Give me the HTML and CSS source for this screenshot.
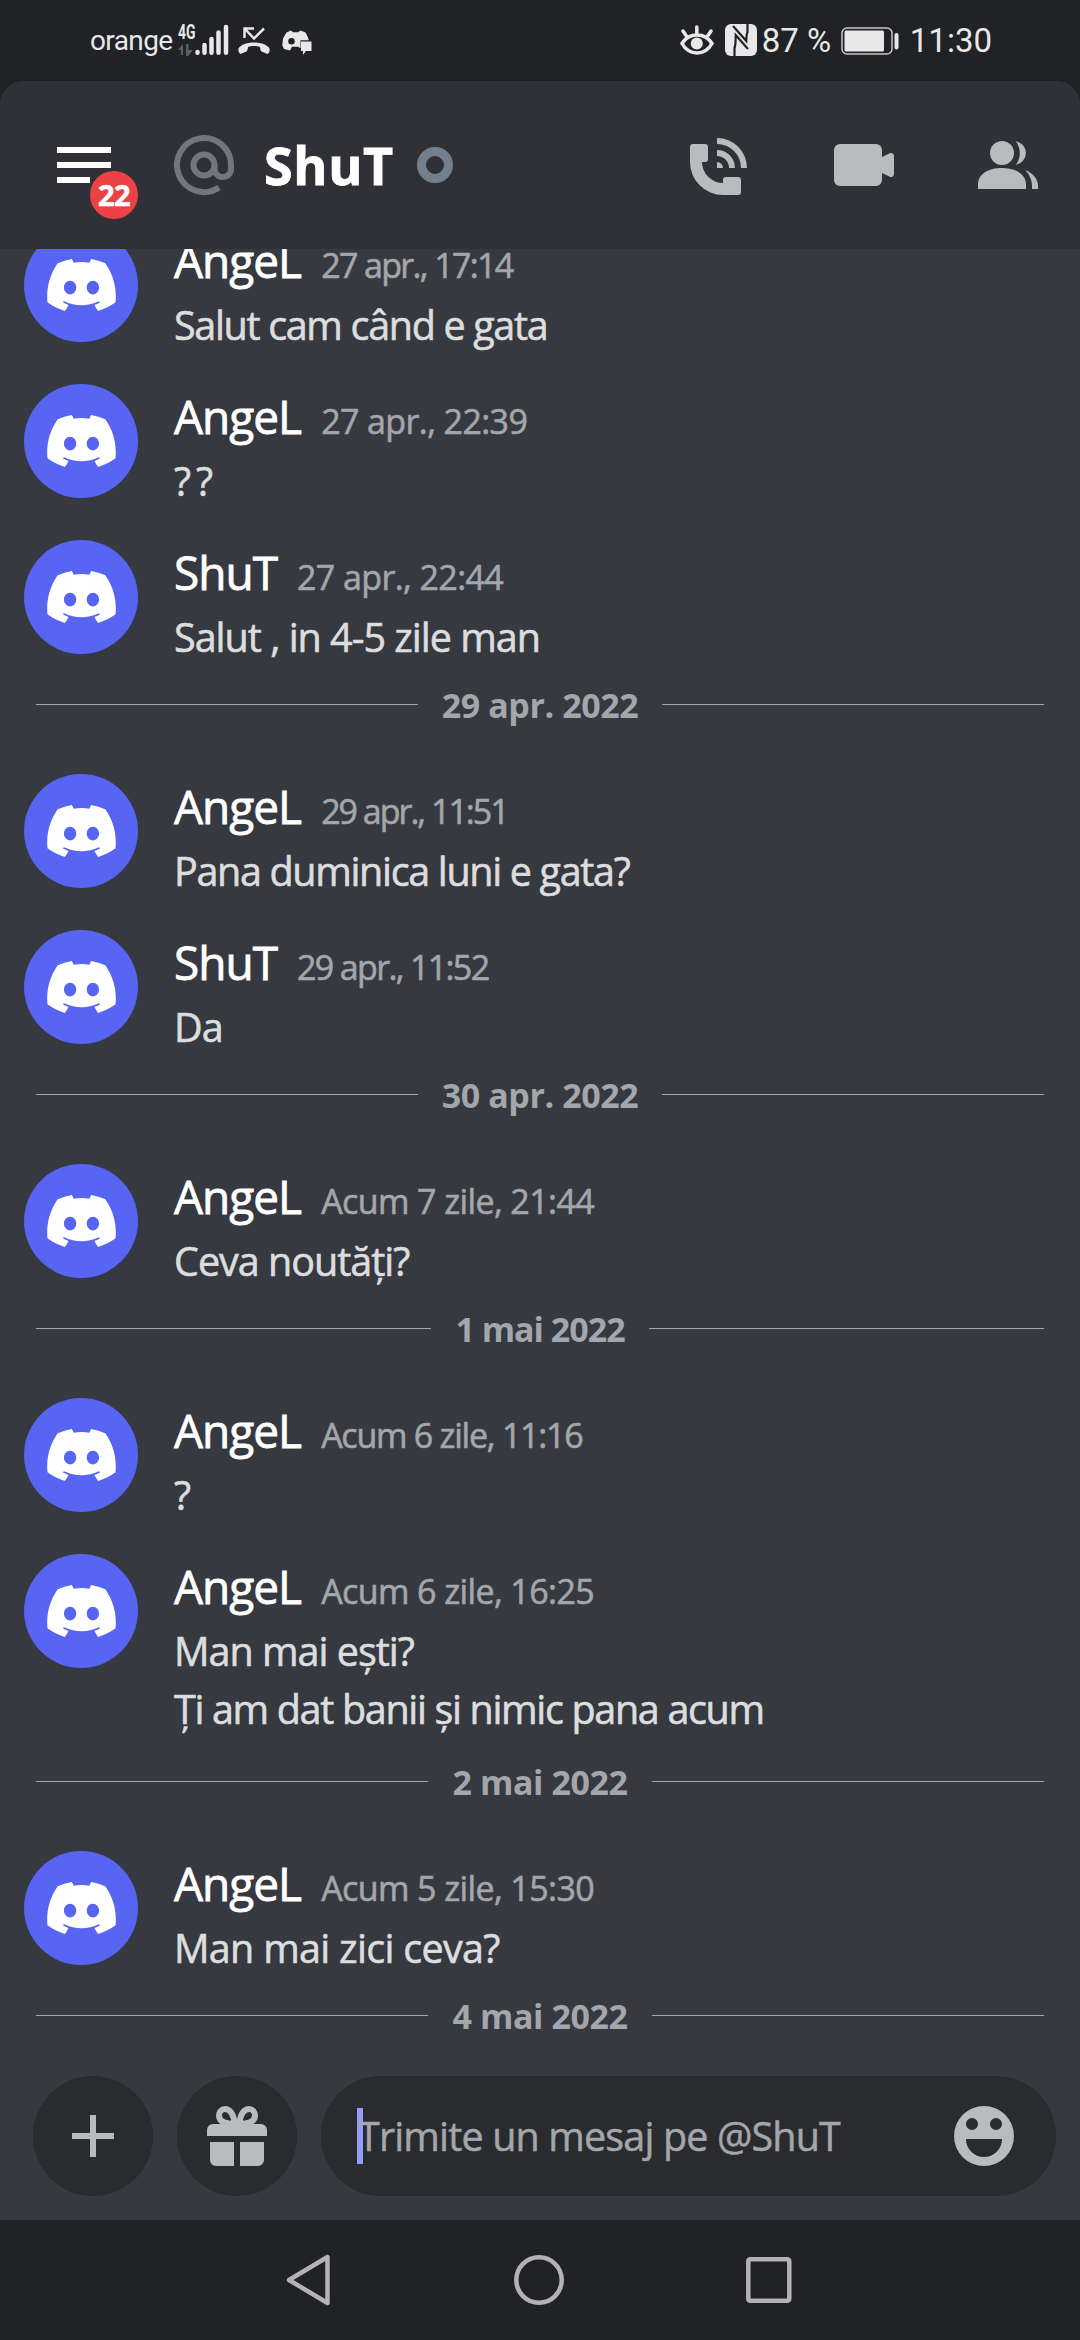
FILE: index.html
```html
<!DOCTYPE html>
<html lang="ro">
<head>
<meta charset="utf-8">
<title>ShuT</title>
<link rel="stylesheet" href="styles.css">
</head>
<body>
<svg class="defs" width="0" height="0" aria-hidden="true">
  <symbol id="logo" viewBox="0 0 127.14 96.36"><path d="M107.7,8.07A105.15,105.15,0,0,0,81.47,0a72.06,72.06,0,0,0-3.36,6.83A97.68,97.68,0,0,0,49,6.83,72.37,72.37,0,0,0,45.64,0,105.89,105.89,0,0,0,19.39,8.09C2.79,32.65-1.71,56.6.54,80.21h0A105.73,105.73,0,0,0,32.71,96.36,77.7,77.7,0,0,0,39.6,85.25a68.42,68.42,0,0,1-10.85-5.18c.91-.66,1.8-1.34,2.66-2a75.57,75.57,0,0,0,64.32,0c.87.71,1.76,1.39,2.66,2a68.68,68.68,0,0,1-10.87,5.19,77,77,0,0,0,6.89,11.1A105.25,105.25,0,0,0,126.6,80.22h0C129.24,52.84,122.09,29.11,107.7,8.07ZM42.45,65.69C36.18,65.69,31,60,31,53s5-12.74,11.43-12.74S54,46,53.89,53,48.84,65.69,42.45,65.69Zm42.24,0C78.41,65.69,73.25,60,73.25,53s5-12.74,11.44-12.74S96.23,46,96.12,53,91.08,65.69,84.69,65.69Z"/></symbol>
</svg>
<div class="screen">
  <div class="status">
    <div class="status-left">
      <span class="carrier">orange</span>
      <svg class="signal" width="51" height="34" viewBox="0 0 51 34">
        <text class="net" x="0" y="15.5" textLength="17.5" lengthAdjust="spacingAndGlyphs">4G</text>
        <path class="dim" d="M0 27l5-6v11H3v-5zM8 21h2.500v6H15l-5 6H8z"/>
        <g class="bars"><path d="M19.500 29v.8M26.500 22v7.800M33.500 16v13.800M40.500 9.500v20.300M48 4v25.800"/></g>
      </svg>
      <svg class="missed" width="32" height="28" viewBox="0 0 32 28">
        <path class="line" d="M6.500 11V1.500H16M7 2l9 9.500L26 1.500"/>
        <path d="M.5 21.500C5 13.500 27 13.500 31.500 21.500c.6 2-.3 5-2 5.500l-6-2.500c-1.500-.8-1-3.500-1.700-4.500-3-1.200-8.600-1.200-11.600 0-.7 1-.2 3.700-1.700 4.500l-6 2.500c-1.700-.5-2.600-3.500-2-5.500z"/>
      </svg>
      <svg class="bot" width="30" height="26" viewBox="0 0 30 26">
        <path fill-rule="evenodd" d="M4.500 2.500 9 .5l2 1.800h5L18.500.5l5 2 2.500 5 .8 2.700H18.500v8L16 16.800H10L8 20.500 2 19 .3 15.500l.7-7zM9.500 8a3.300 3.300 0 1 0 0 6.600 3.300 3.300 0 1 0 0-6.600z"/>
        <path d="M19 11.500h10.500v9.500H24l-3 4v-4h-2z"/>
      </svg>
    </div>
    <div class="status-right">
      <svg class="eye" width="34" height="30" viewBox="0 0 34 30">
        <path class="stroke" d="M2 18.500C9 7 25 7 32 18.500 25 31 9 31 2 18.500zM16.800 2v6M3 6l4 6M31 6l-4 6"/>
        <circle cx="16.800" cy="18.500" r="6"/>
      </svg>
      <svg class="nfc" width="32" height="32" viewBox="0 0 32 32">
        <rect width="32" height="32" rx="6"/>
        <path class="cut" d="M9.500 33V24c1.500-4 1-8 1.200-13L23 25M22.500-1v9c-1.500 3-1 5-1.200 9L8 2"/>
      </svg>
      <span class="percent">87 %</span>
      <svg class="battery" width="58" height="28" viewBox="0 0 58 28">
        <rect class="frame" x="1" y="1" width="50" height="26" rx="5"/>
        <rect x="3.500" y="3.500" width="39.500" height="21" rx="1.500"/>
        <rect x="53.500" y="6" width="4" height="16.500" rx="2"/>
      </svg>
      <span class="clock">11:30</span>
    </div>
  </div>

  <div class="app">
    <header class="header">
      <div class="menu">
        <svg width="54" height="36" viewBox="0 0 54 36"><path d="M0 0h54v6H0zM0 15h54v6H0zM0 30h33v6H0z"/></svg>
        <span class="badge">22</span>
      </div>
      <svg class="at" width="72" height="72" viewBox="0 0 24 24"><circle cx="12" cy="12" r="3.500"/><path d="M17 19.500A9 9 0 1 1 21 12v1.300a2.750 2.700 0 0 1-5.500 0V12"/></svg>
      <h1 class="title">ShuT</h1>
      <span class="offline"></span>
      <div class="actions">
        <svg class="call" width="72" height="72" viewBox="0 0 24 24"><path d="M4 5h4a1 1 0 0 1 1 1v4a1 1 0 0 1-1 1H7a7 7 0 0 0 7 7v-1a1 1 0 0 1 1-1h4a1 1 0 0 1 1 1v4a1 1 0 0 1-1 1h-5A11 11 0 0 1 3 11V6a1 1 0 0 1 1-1zM12 11a2 2 0 0 1 2 2h-2zM12 7a6 6 0 0 1 6 6h-2a4 4 0 0 0-4-4zM12 3a10 10 0 0 1 10 10h-2a8 8 0 0 0-8-8z"/></svg>
        <svg width="72" height="72" viewBox="0 0 24 24"><path d="M4 5h12a2 2 0 0 1 2 2v2.300l2.600-1.200A1 1 0 0 1 22 9v6a1 1 0 0 1-1.400.9L18 14.700V17a2 2 0 0 1-2 2H4a2 2 0 0 1-2-2V7a2 2 0 0 1 2-2z"/></svg>
        <svg width="72" height="72" viewBox="0 0 24 24"><circle cx="10" cy="8" r="4"/><path d="M2 20v-1.500C2 15 5.500 13 10 13s8 2 8 5.500V20zM14.600 4.050a4 4 0 0 1 0 7.900 6.500 6.500 0 0 0 0-7.900zM17.700 13.700C20.500 14.800 22 16.800 22 19v1h-2v-1c0-2-.8-3.800-2.300-5.300z"/></svg>
      </div>
    </header>

    <main class="messages">
      <article class="message">
        <div class="avatar"><svg><use href="#logo"/></svg></div>
        <div class="body"><div class="meta"><span class="name">AngeL</span><time class="narrow">27 apr., 17:14</time></div><p class="snug">Salut cam când e gata</p></div>
      </article>
      <article class="message">
        <div class="avatar"><svg><use href="#logo"/></svg></div>
        <div class="body"><div class="meta"><span class="name">AngeL</span><time>27 apr., 22:39</time></div><p class="wide">??</p></div>
      </article>
      <article class="message">
        <div class="avatar"><svg><use href="#logo"/></svg></div>
        <div class="body"><div class="meta"><span class="name">ShuT</span><time>27 apr., 22:44</time></div><p>Salut , in 4-5 zile man</p></div>
      </article>
      <div class="divider"><span>29 apr. 2022</span></div>
      <article class="message">
        <div class="avatar"><svg><use href="#logo"/></svg></div>
        <div class="body"><div class="meta"><span class="name">AngeL</span><time class="narrower">29 apr., 11:51</time></div><p class="snug">Pana duminica luni e gata?</p></div>
      </article>
      <article class="message">
        <div class="avatar"><svg><use href="#logo"/></svg></div>
        <div class="body"><div class="meta"><span class="name">ShuT</span><time class="narrow">29 apr., 11:52</time></div><p>Da</p></div>
      </article>
      <div class="divider"><span>30 apr. 2022</span></div>
      <article class="message">
        <div class="avatar"><svg><use href="#logo"/></svg></div>
        <div class="body"><div class="meta"><span class="name">AngeL</span><time>Acum 7 zile, 21:44</time></div><p>Ceva noutăți?</p></div>
      </article>
      <div class="divider"><span class="narrow-date">1 mai 2022</span></div>
      <article class="message">
        <div class="avatar"><svg><use href="#logo"/></svg></div>
        <div class="body"><div class="meta"><span class="name">AngeL</span><time class="trim">Acum 6 zile, 11:16</time></div><p>?</p></div>
      </article>
      <article class="message">
        <div class="avatar"><svg><use href="#logo"/></svg></div>
        <div class="body"><div class="meta"><span class="name">AngeL</span><time>Acum 6 zile, 16:25</time></div><p>Man mai ești?</p><p class="snug">Ți am dat banii și nimic pana acum</p></div>
      </article>
      <div class="divider"><span>2 mai 2022</span></div>
      <article class="message">
        <div class="avatar"><svg><use href="#logo"/></svg></div>
        <div class="body"><div class="meta"><span class="name">AngeL</span><time>Acum 5 zile, 15:30</time></div><p class="loose">Man mai zici ceva?</p></div>
      </article>
      <div class="divider"><span>4 mai 2022</span></div>
    </main>

    <footer class="composer">
      <div class="round"><svg width="42" height="42" viewBox="0 0 42 42"><path d="M18 0h6v18h18v6H24v18h-6V24H0v-6h18z"/></svg></div>
      <div class="round"><svg width="72" height="72" viewBox="0 0 24 24"><path d="M4 8h16a2 2 0 0 1 2 2v2H2v-2a2 2 0 0 1 2-2zM3 14h8v8H5a2 2 0 0 1-2-2zM13 14h8v6a2 2 0 0 1-2 2h-6z"/><path class="bow" d="M11.200 8C11 5 9.800 3 8 3 6.800 3 6 4 6 5.200 6 7.200 8 8 11.200 8zM12.800 8C13 5 14.200 3 16 3c1.200 0 2 1 2 2.200C18 7.200 16 8 12.800 8z"/></svg></div>
      <div class="input">
        <span class="caret"></span>
        <span class="placeholder">Trimite un mesaj pe @ShuT</span>
        <svg class="emoji" width="60" height="60" viewBox="0 0 60 60"><path fill-rule="evenodd" d="M30 0a30 30 0 1 0 0 60 30 30 0 1 0 0-60zM18 12a6 6 0 1 1 0 12 6 6 0 1 1 0-12zM42 12a6 6 0 1 1 0 12 6 6 0 1 1 0-12zM12 33h36a18 18 0 0 1-36 0z"/></svg>
      </div>
    </footer>
  </div>

  <nav class="nav">
    <svg width="50" height="54" viewBox="0 0 50 54"><path d="M43.500 4v46L5 27z"/></svg>
    <svg width="54" height="54" viewBox="0 0 54 54"><circle cx="27" cy="27" r="22.700"/></svg>
    <svg width="50" height="54" viewBox="0 0 50 54"><rect x="4.300" y="6.300" width="41" height="41.500" rx="2"/></svg>
  </nav>
</div>
</body>
</html>
```
FILE: styles.css
```css
* { box-sizing: border-box; margin: 0; padding: 0; }
body { background: #202225; font-family: "Open Sans", "Noto Sans", sans-serif; }
svg { display: block; flex: none; }
.defs { position: absolute; }
.screen { width: 1080px; height: 2340px; display: flex; flex-direction: column; overflow: hidden; background: #202225; white-space: nowrap; }

.status { height: 81px; flex: none; display: flex; justify-content: space-between; padding: 0 88px 0 90px; color: #e8e8e8; fill: #e8e8e8; font-family: Roboto, sans-serif; }
.status-left, .status-right { display: flex; align-items: flex-start; }
.carrier { width: 88px; font-size: 28px; line-height: 34px; padding-top: 24px; letter-spacing: -.6px; }
.signal { margin-top: 23px; overflow: visible; }
.net { font-weight: 700; font-size: 19.500px; }
.dim { fill: #5c5d60; }
.bars { fill: none; stroke: #e8e8e8; stroke-width: 4.500; stroke-linecap: round; }
.missed { margin: 27px 0 0 9px; }
.missed .line { fill: none; stroke: #e8e8e8; stroke-width: 2.500; }
.bot { margin: 30px 0 0 12px; }
.eye { margin: 25px 11px 0 0; }
.eye .stroke { fill: none; stroke: #e8e8e8; stroke-width: 3.500; stroke-linecap: round; }
.nfc { margin: 24px 5px 0 0; }
.nfc .cut { fill: none; stroke: #202225; stroke-width: 2.200; }
.percent, .clock { font-size: 33px; line-height: 38px; padding-top: 22px; }
.percent { width: 79px; }
.battery { margin: 27px 11px 0 0; }
.battery .frame { fill: none; stroke: #c8c8c8; stroke-width: 1.500; }

.app { flex: 1; min-height: 0; display: flex; flex-direction: column; border-radius: 24px 24px 0 0; overflow: hidden; background: #36393f; }
.header { height: 168px; flex: none; display: flex; align-items: center; background: #2f3136; }
.menu { position: relative; margin-left: 57px; width: 111px; fill: #fff; }
.badge { position: absolute; left: 33px; top: 24px; width: 48px; height: 48px; border-radius: 50%; background: #ed4245; color: #fff; font-weight: 700; font-size: 29px; line-height: 48px; text-align: center; letter-spacing: -.5px; -webkit-text-stroke: .5px; }
.at { fill: none; stroke: #72767d; stroke-width: 2; }
.title { margin-left: 24px; width: 153px; color: #fff; font-size: 52px; line-height: 70px; font-weight: 700; letter-spacing: .7px; -webkit-text-stroke: .8px; }
.offline { width: 36px; height: 36px; border-radius: 50%; border: 9px solid #747f8d; }
.actions { margin-left: auto; padding-right: 36px; display: flex; gap: 72px; fill: #b9bbbe; }
.call { margin-right: 3px; }

.messages { flex: 1; min-height: 0; overflow: hidden; -webkit-text-stroke: .6px; }
.messages > :first-child { margin-top: -21px; }
.message { display: flex; padding: 0 24px 5px; gap: 36px; min-height: 156px; }
.avatar { width: 114px; height: 114px; flex: none; border-radius: 50%; background: #5865f2; display: flex; align-items: center; justify-content: center; }
.avatar svg { width: 69px; height: 52px; fill: #fff; }
.meta { display: flex; align-items: baseline; gap: 20px; height: 68px; line-height: 64px; }
.name { color: #fff; font-size: 46px; letter-spacing: -1px; -webkit-text-stroke: .8px; }
time { color: #a3a6aa; font-size: 34px; letter-spacing: -.600px; }
time.trim { letter-spacing: -1.250px; }
time.narrow { letter-spacing: -1.650px; }
time.narrower { letter-spacing: -2px; }
.body p { color: #dcddde; font-size: 39.500px; line-height: 58px; height: 58px; letter-spacing: -1px; }
.body p + p { margin-bottom: 30px; }
.body .snug { letter-spacing: -1.330px; }
.body .loose { letter-spacing: -.7px; }
.body .wide { letter-spacing: 5px; }
.divider { height: 78px; padding: 0 36px; display: flex; align-items: flex-start; gap: 24px; color: #a3a6aa; font-weight: 700; font-size: 34px; line-height: 46px; letter-spacing: -.4px; -webkit-text-stroke: 0; }
.divider::before, .divider::after { content: ""; flex: 1; height: 1px; margin-top: 8px; background: #a3a6aa; }
.divider span { margin-top: -14px; }
.divider .narrow-date { letter-spacing: -1px; }

.composer { height: 144px; flex: none; display: flex; gap: 24px; padding: 0 24px 24px 33px; fill: #b9bbbe; }
.round { width: 120px; height: 120px; border-radius: 50%; background: #292b2f; display: flex; align-items: center; justify-content: center; }
.bow { fill: none; stroke: #b9bbbe; stroke-width: 2; }
.input { flex: 1; height: 120px; border-radius: 60px; background: #292b2f; display: flex; align-items: center; padding: 0 42px 0 36px; }
.caret { width: 6px; height: 56px; background: #949cf7; }
.placeholder { margin-left: -5px; color: #a3a6aa; font-size: 39.500px; letter-spacing: -.850px; -webkit-text-stroke: .5px; }
.emoji { margin-left: auto; }

.nav { height: 120px; flex: none; display: flex; align-items: center; justify-content: space-between; padding: 0 286px 0 284px; fill: none; stroke: #b3b3b3; stroke-width: 4.500; stroke-linejoin: round; }
```
